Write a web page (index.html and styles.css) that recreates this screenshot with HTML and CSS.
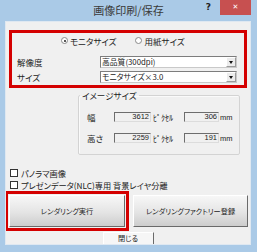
FILE: index.html
```html
<!DOCTYPE html>
<html lang="ja">
<head>
    <meta charset="UTF-8">
    <title>画像印刷/保存</title>
    <link rel="stylesheet" href="styles.css">
</head>
<body>
    <div class="window">
        <div class="titlebar">
            <span></span>
            <span class="title">画像印刷/保存</span>
            <div class="caption-buttons">
                <span class="help">?</span>
                <span class="close">&#x2715;</span>
            </div>
        </div>
        <div class="client">
            <div class="mark settings">
                <div class="radio-row">
                    <label class="radio"><span class="radio-dot checked"></span>モニタサイズ</label>
                    <label class="radio"><span class="radio-dot"></span>用紙サイズ</label>
                </div>
                <div class="field-row">
                    <span class="field-label">解像度</span>
                    <div class="combo"><span class="combo-text">高品質(300dpi)</span><span class="combo-arrow"></span></div>
                </div>
                <div class="field-row">
                    <span class="field-label">サイズ</span>
                    <div class="combo"><span class="combo-text">モニタサイズ×3.0</span><span class="combo-arrow"></span></div>
                </div>
            </div>

            <fieldset class="image-size">
                <legend>イメージサイズ</legend>
                <div class="size-row">
                    <span class="size-label">幅</span>
                    <span class="num px">3612</span>
                    <span class="unit">ﾋﾟｸｾﾙ</span>
                    <span class="num mm">306</span>
                    <span class="unit-mm">mm</span>
                </div>
                <div class="size-row">
                    <span class="size-label">高さ</span>
                    <span class="num px">2259</span>
                    <span class="unit">ﾋﾟｸｾﾙ</span>
                    <span class="num mm">191</span>
                    <span class="unit-mm">mm</span>
                </div>
            </fieldset>

            <div class="checks">
                <label class="check"><span class="box"></span>パノラマ画像</label>
                <label class="check"><span class="box"></span>プレゼンデータ(NLC)専用 背景レイヤ分離</label>
            </div>

            <div class="actions">
                <div class="mark run-mark">
                    <button class="btn big">レンダリング実行</button>
                </div>
                <button class="btn big factory">レンダリングファクトリー登録</button>
            </div>
            <button class="btn close-btn">閉じる</button>
        </div>
    </div>
</body>
</html>
```

FILE: styles.css
```css
* {
    box-sizing: border-box;
}

body {
    margin: 0;
    width: 257px;
    height: 252px;
    overflow: hidden;
    background-color: #aacae7;
    font-family: "Noto Sans CJK JP", sans-serif;
    font-size: 8.5px;
    font-feature-settings: "palt";
    color: #222;
}

.window {
    height: 252px;
    display: flex;
    flex-direction: column;
}

/* title bar */
.titlebar {
    height: 21px;
    flex-shrink: 0;
    display: grid;
    grid-template-columns: 1fr auto 1fr;
}

.title {
    font-size: 11px;
    line-height: 21px;
    color: #3a3a3a;
}

.caption-buttons {
    display: flex;
    justify-content: flex-end;
    align-items: flex-start;
}

.help {
    font-family: "DejaVu Sans", sans-serif;
    font-weight: bold;
    font-size: 9px;
    line-height: 15px;
    margin-right: 9px;
    color: #222;
}

.close {
    width: 31px;
    height: 15px;
    margin-right: 6px;
    background-color: #c75050;
    color: #fff;
    font-family: "DejaVu Sans", sans-serif;
    font-size: 7px;
    font-weight: bold;
    line-height: 15px;
    text-align: center;
}

/* dialog body */
.client {
    margin: 0 6px 0 5px;
    height: 224px;
    background-color: #f0f0f0;
    border: 1px solid #dfe8f1;
    overflow: hidden;
}

.mark {
    border: 3px solid #d40000;
}

.settings {
    margin: 8px 0 0 3px;
    width: 238px;
    height: 58px;
}

.radio-row {
    height: 15px;
    display: flex;
    align-items: center;
    padding-left: 49px;
    gap: 19px;
}

.radio {
    display: flex;
    align-items: center;
    gap: 2px;
}

.radio-dot {
    width: 7px;
    height: 7px;
    border: 1px solid #8a8a8a;
    border-radius: 50%;
    background-color: #fff;
    position: relative;
}

.radio-dot.checked::after {
    content: "";
    position: absolute;
    left: 1.5px;
    top: 1.5px;
    width: 2px;
    height: 2px;
    border-radius: 50%;
    background-color: #222;
}

.field-row {
    display: flex;
    align-items: center;
    height: 12px;
    margin-top: 8px;
}

.field-row + .field-row {
    margin-top: 3px;
}

.field-label {
    width: 88px;
    padding-left: 5px;
}

.combo {
    width: 137px;
    height: 12px;
    display: flex;
    align-items: center;
    border: 1px solid #7d7d7d;
    border-right-color: #c9c9c9;
    border-bottom-color: #c9c9c9;
    background-color: #fff;
    font-size: 7.8px;
}

.combo-text {
    flex: 1;
    padding-left: 1px;
    line-height: 10px;
}

.combo-arrow {
    width: 10px;
    height: 10px;
    background-color: #ececec;
    border: 1px solid #fff;
    border-right-color: #9a9a9a;
    border-bottom-color: #9a9a9a;
    position: relative;
}

.combo-arrow::after {
    content: "";
    position: absolute;
    left: 2px;
    top: 3px;
    border-left: 2.5px solid transparent;
    border-right: 2.5px solid transparent;
    border-top: 3px solid #111;
}

/* image size group */
.image-size {
    margin: 1px 0 0 72px;
    width: 162px;
    height: 66px;
    padding: 11px 0 11px 0;
    border: 1px solid #d3d3d3;
    border-radius: 2px;
    box-shadow: inset 1px 1px 0 #fafafa;
}

.image-size legend {
    margin-left: 1px;
    padding: 0 2px;
    line-height: 12px;
}

.size-row {
    display: flex;
    align-items: center;
    height: 10px;
    margin-left: 8px;
}

.size-row + .size-row {
    margin-top: 11px;
}

.size-label {
    width: 27px;
}

.num {
    height: 10px;
    line-height: 8px;
    text-align: right;
    padding-right: 1px;
    border: 1px solid #6d6d6d;
    border-right-color: #dcdcdc;
    border-bottom-color: #dcdcdc;
    background-color: #f0f0f0;
    font-family: "Liberation Sans", sans-serif;
    font-size: 7.5px;
}

.num.px {
    width: 37px;
}

.num.mm {
    width: 35px;
}

.unit {
    width: 33px;
    padding-left: 2px;
    font-size: 8px;
}

.unit-mm {
    padding-left: 1px;
    font-family: "Liberation Sans", sans-serif;
    font-size: 7.5px;
}

/* checkboxes */
.checks {
    margin: 12px 0 0 4px;
    font-size: 8.2px;
}

.check {
    height: 12px;
    display: flex;
    align-items: center;
    gap: 3px;
}

.box {
    width: 8px;
    height: 8px;
    border: 1px solid #333;
    background-color: #fff;
}

/* buttons */
.actions {
    display: flex;
    align-items: center;
    margin-left: -1px;
}

.run-mark {
    width: 124px;
    height: 40px;
    padding: 1px;
}

.btn {
    font-family: inherit;
    font-size: 7.2px;
    font-feature-settings: "palt";
    color: #222;
    padding: 0;
    border: 1px solid #fff;
    border-right-color: #6a6a6a;
    border-bottom-color: #6a6a6a;
    background: linear-gradient(#f7f7f7, #e4e4e4 55%, #cdcdcd);
}

.big {
    width: 116px;
    height: 32px;
}

.factory {
    width: 115px;
    margin-left: 4px;
}

.close-btn {
    display: block;
    width: 51px;
    height: 13px;
    margin: 1px auto 0;
    line-height: 11px;
    background: #f6f6f6;
}
```
